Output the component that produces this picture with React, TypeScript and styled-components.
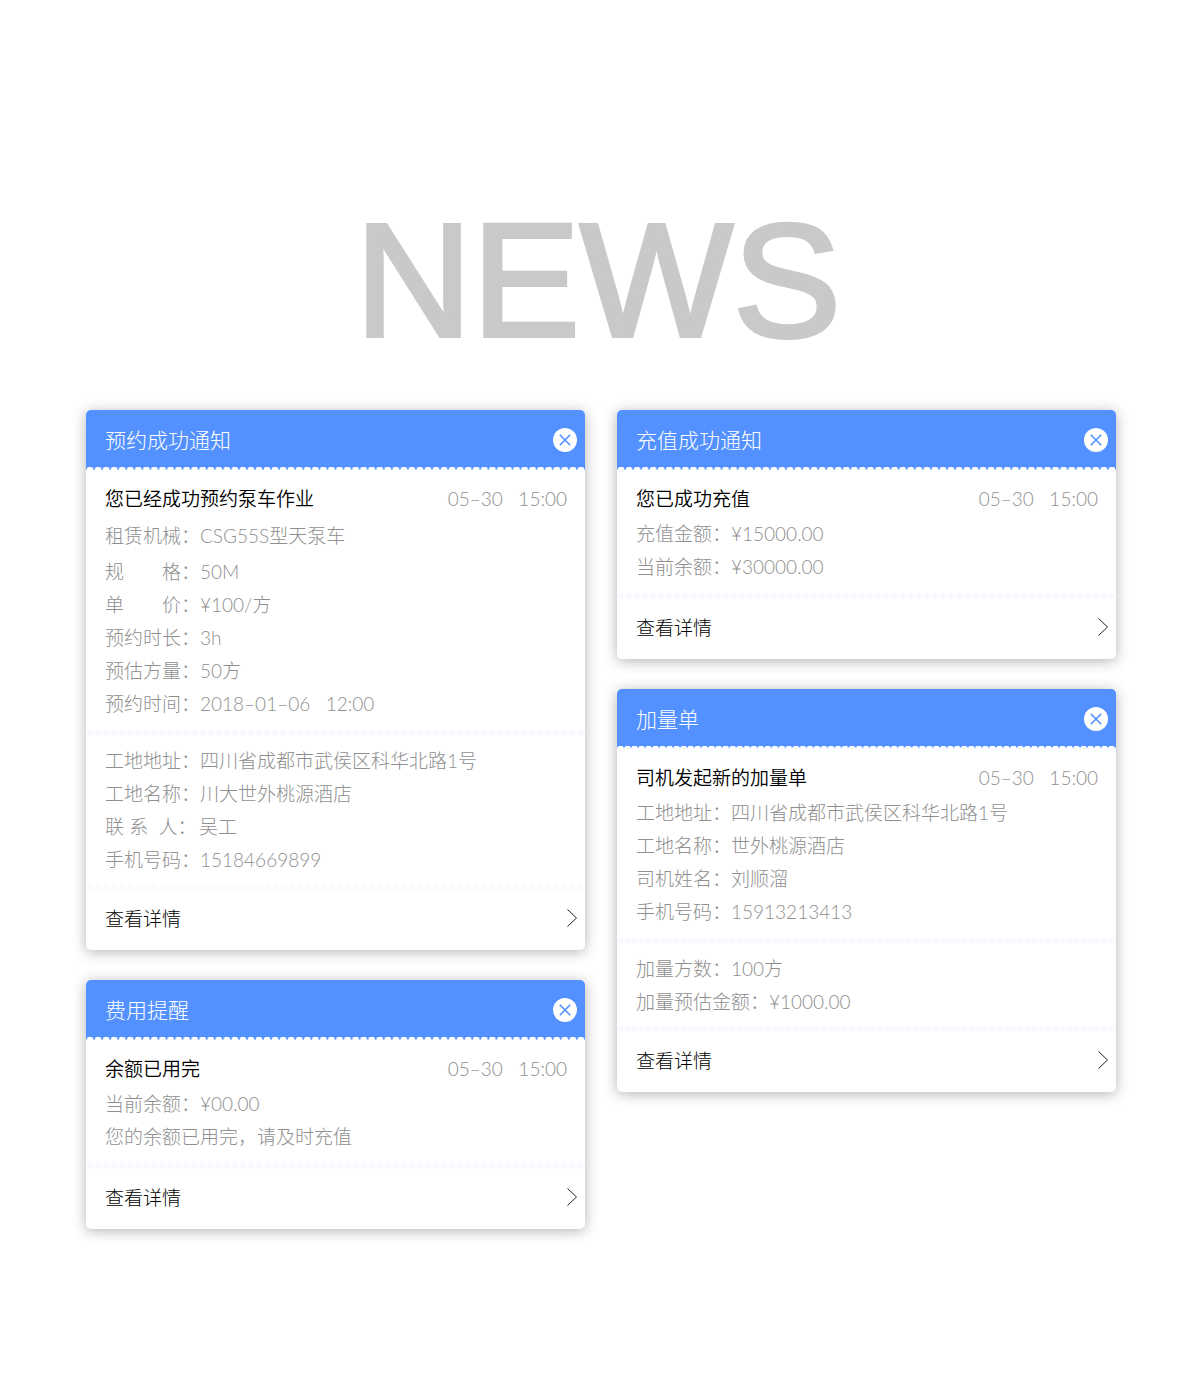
import React from "react";
import styled, { createGlobalStyle } from "styled-components";

const GlobalStyle = createGlobalStyle`
  *, *::before, *::after { box-sizing: border-box; }
  body {
    margin: 0;
    background: #fff;
    color: #8f8f8f;
    font-family: Lato, "Noto Sans CJK SC", sans-serif;
    font-size: 19px;
    font-weight: 300;
  }
`;

const Page = styled.main`
  padding: 200px 84px 170px 86px;
`;

const Heading = styled.h1`
  margin: 0 0 50px;
  padding-right: 6px;
  font-family: "Liberation Sans", sans-serif;
  font-size: 162px;
  font-weight: 400;
  line-height: 160px;
  text-align: center;
  color: #c9c9c9;
  -webkit-text-stroke: 4px #c9c9c9;
`;

const Board = styled.div`
  display: grid;
  grid-template-columns: repeat(auto-fit, minmax(400px, 1fr));
  gap: 30px 32px;
  align-items: start;
`;

const Column = styled.div`
  display: flex;
  flex-direction: column;
  gap: 30px;
`;

const Card = styled.article`
  border-radius: 5px;
  background: #fff;
  box-shadow: 0 2px 14px rgba(0, 0, 0, 0.3);
`;

const CardHeader = styled.header<{ $pitch: number }>`
  display: flex;
  align-items: center;
  justify-content: space-between;
  height: 60px;
  padding: 0 8px 0 19px;
  border-radius: 5px 5px 0 0;
  background:
    radial-gradient(circle at 50% 100%, #fff 3px, transparent 4px) left bottom /
      ${(p) => p.$pitch}px 3px,
    #5291ff;
  background-repeat: round no-repeat, no-repeat;
`;

const CardName = styled.h2`
  margin: 0;
  font-size: 21px;
  font-weight: 300;
  line-height: 30px;
  color: #fff;
`;

const CloseButton = styled.button`
  display: grid;
  place-items: center;
  width: 24px;
  height: 24px;
  padding: 0;
  border: 0;
  border-radius: 50%;
  background: #fff;
  color: #5291ff;
  cursor: pointer;
`;

const Section = styled.section<{ $first?: boolean }>`
  padding: ${(p) => (p.$first ? "11px 18px 10px 19px" : "8px 18px 8px 19px")};
`;

const TitleRow = styled.div`
  display: flex;
  align-items: center;
  justify-content: space-between;
  line-height: 36px;
`;

const Title = styled.h3`
  margin: 0;
  font-family: Lato, "Noto Sans CJK SC DemiLight", "Noto Sans CJK SC", sans-serif;
  font-size: 19px;
  font-weight: 350;
  color: #000;
`;

const Stamp = styled.time`
  white-space: pre;
`;

const Rows = styled.dl`
  margin: 0;
`;

const Row = styled.div<{ $tall?: boolean }>`
  display: flex;
  line-height: ${(p) => (p.$tall ? 38 : 33)}px;
  white-space: pre;
`;

const Term = styled.dt`
  min-width: 94px;
`;

const Value = styled.dd`
  margin: 0;
`;

const Note = styled.p`
  margin: 0;
  line-height: 33px;
`;

const Divider = styled.hr<{ $pitch: number }>`
  height: 6px;
  margin: 0;
  border: 0;
  background: radial-gradient(circle, #f8f8ff 2px, transparent 4px) left top /
    ${(p) => p.$pitch}px 6px;
  background-repeat: round no-repeat;
`;

const DetailLink = styled.a`
  display: flex;
  align-items: center;
  justify-content: space-between;
  height: 60px;
  padding: 0 8px 5px 19px;
  color: #000;
  text-decoration: none;
`;

type Item = { label: string; value: string; tall?: boolean };
type Notice = {
  name: string;
  title: string;
  groups: Item[][];
  note?: string;
  pitch: number;
};

const left: Notice[] = [
  {
    name: "预约成功通知",
    title: "您已经成功预约泵车作业",
    pitch: 8,
    groups: [
      [
        { label: "租赁机械：", value: "CSG55S型天泵车", tall: true },
        { label: "规　　格：", value: "50M" },
        { label: "单　　价：", value: "¥100/方" },
        { label: "预约时长：", value: "3h" },
        { label: "预估方量：", value: "50方" },
        { label: "预约时间：", value: "2018–01–06   12:00" },
      ],
      [
        { label: "工地地址：", value: "四川省成都市武侯区科华北路1号" },
        { label: "工地名称：", value: "川大世外桃源酒店" },
        { label: "联 系  人：", value: "吴工" },
        { label: "手机号码：", value: "15184669899" },
      ],
    ],
  },
  {
    name: "费用提醒",
    title: "余额已用完",
    pitch: 8,
    groups: [[{ label: "当前余额：", value: "¥00.00" }]],
    note: "您的余额已用完，请及时充值",
  },
];

const right: Notice[] = [
  {
    name: "充值成功通知",
    title: "您已成功充值",
    pitch: 8,
    groups: [
      [
        { label: "充值金额：", value: "¥15000.00" },
        { label: "当前余额：", value: "¥30000.00" },
      ],
    ],
  },
  {
    name: "加量单",
    title: "司机发起新的加量单",
    pitch: 7,
    groups: [
      [
        { label: "工地地址：", value: "四川省成都市武侯区科华北路1号" },
        { label: "工地名称：", value: "世外桃源酒店" },
        { label: "司机姓名：", value: "刘顺溜" },
        { label: "手机号码：", value: "15913213413" },
      ],
      [
        { label: "加量方数：", value: "100方" },
        { label: "加量预估金额：", value: "¥1000.00" },
      ],
    ],
  },
];

function NoticeCard({ notice }: { notice: Notice }) {
  const { name, title, groups, note, pitch } = notice;
  return (
    <Card>
      <CardHeader $pitch={pitch}>
        <CardName>{name}</CardName>
        <CloseButton type="button" aria-label="关闭">
          <svg width="12" height="12" viewBox="0 0 12 12" fill="none" stroke="currentColor" strokeWidth="1.6">
            <path d="M0.8 0.8l10.4 10.4M11.2 0.8L0.8 11.2" />
          </svg>
        </CloseButton>
      </CardHeader>
      {groups.map((items, i) => (
        <React.Fragment key={i}>
          <Section $first={i === 0}>
            {i === 0 && (
              <TitleRow>
                <Title>{title}</Title>
                <Stamp>05–30   15:00</Stamp>
              </TitleRow>
            )}
            <Rows>
              {items.map((item) => (
                <Row key={item.label} $tall={item.tall}>
                  <Term>{item.label}</Term>
                  <Value>{item.value}</Value>
                </Row>
              ))}
            </Rows>
            {note && <Note>{note}</Note>}
          </Section>
          <Divider $pitch={pitch} />
        </React.Fragment>
      ))}
      <DetailLink href="#">
        查看详情
        <svg width="10" height="18" viewBox="0 0 10 18" fill="none" stroke="#222" strokeWidth="1">
          <path d="M0.5 0.5l9 8.5l-9 8.5" />
        </svg>
      </DetailLink>
    </Card>
  );
}

export default function App() {
  return (
    <>
      <GlobalStyle />
      <Page>
        <Heading>NEWS</Heading>
        <Board>
          {[left, right].map((column, i) => (
            <Column key={i}>
              {column.map((notice) => (
                <NoticeCard key={notice.name} notice={notice} />
              ))}
            </Column>
          ))}
        </Board>
      </Page>
    </>
  );
}
